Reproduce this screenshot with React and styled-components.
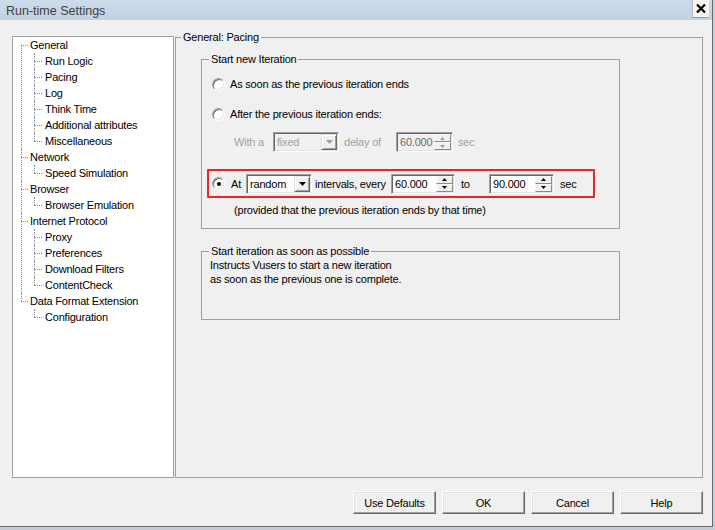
import React from 'react'
import styled, { createGlobalStyle } from 'styled-components'

const GlobalStyle = createGlobalStyle`
  html, body {
    margin: 0;
    padding: 0;
  }
  body {
    background: #c5ccd4;
    font-family: "Liberation Sans", Arial, sans-serif;
    font-size: 11px;
    letter-spacing: -0.2px;
    color: #000;
  }
`

const Window = styled.div`
  width: 712px;
  height: 526px;
  background: #f0f0f0;
  border-right: 1px solid #6b6b6b;
  border-bottom: 1px solid #6b6b6b;
  display: flex;
  flex-direction: column;
`

const TitleBar = styled.div`
  height: 20px;
  display: flex;
  align-items: center;
  justify-content: space-between;
  padding-left: 6px;
  padding-right: 3px;
  background: linear-gradient(#cddbea, #c2d2e3);
`

const Title = styled.span`
  font-size: 12.5px;
  letter-spacing: 0;
  color: #404040;
  margin-top: 1px;
`

const CloseButton = styled.div`
  width: 16px;
  height: 17px;
  align-self: flex-start;
  display: flex;
  align-items: center;
  justify-content: center;
  background: #f4f4f4;
  border-left: 1px solid #b8bcc2;
  border-bottom: 1px solid #9a9ea4;
`

const Main = styled.div`
  display: flex;
  align-items: flex-start;
  padding: 11px 0 0 12px;
`

const Tree = styled.div`
  width: 162px;
  height: 442px;
  box-sizing: border-box;
  margin-top: 5px;
  background: #fff;
  border: 1px solid #a0a0a0;
`

const TreeNode = styled.div`
  position: relative;
  &::before {
    content: '';
    position: absolute;
    left: ${p => (p.$level ? 21 : 8)}px;
    top: ${p => (p.$first && !p.$level ? 8 : 0)}px;
    ${p => (p.$last ? 'height: 8px;' : 'bottom: 0;')}
    border-left: 1px dotted #8c8c8c;
  }
`

const TreeRow = styled.div`
  position: relative;
  height: 16px;
  line-height: 16px;
  padding-left: ${p => (p.$level ? 32 : 17)}px;
  white-space: nowrap;
  &::before {
    content: '';
    position: absolute;
    left: ${p => (p.$level ? 21 : 8)}px;
    top: 8px;
    width: ${p => (p.$level ? 8 : 7)}px;
    border-top: 1px dotted #8c8c8c;
  }
`

const GroupBox = styled.fieldset`
  margin: ${p => p.$mt || 0}px 0 0 ${p => p.$ml || 0}px;
  padding: 0;
  width: ${p => p.$w}px;
  height: ${p => p.$h}px;
  box-sizing: border-box;
  border: 1px solid #a0a0a0;
  min-width: 0;
`

const GroupTitle = styled.legend`
  margin-left: ${p => p.$indent}px;
  padding: 0 2px;
  line-height: 13px;
  height: 13px;
`

const PanelBody = styled.div`
  padding-left: 25px;
`

const GroupBody = styled.div`
  padding-left: ${p => p.$pl || 0}px;
`

const OptionRow = styled.div`
  display: flex;
  align-items: center;
  height: ${p => p.$h || 16}px;
  margin-top: ${p => p.$mt || 0}px;
  padding-left: ${p => p.$pl || 0}px;
  color: ${p => (p.$disabled ? '#a0a0a0' : '#000')};
  white-space: nowrap;
`

const Highlight = styled.div`
  margin: 17px 0 0 5px;
  width: 388px;
  height: 29px;
  box-sizing: border-box;
  border: 2px solid #e5262c;
  border-radius: 1px;
  display: flex;
  align-items: center;
  padding-left: 3px;
`

const Radio = styled.span`
  position: relative;
  flex: none;
  width: 13px;
  height: 13px;
  box-sizing: border-box;
  border-radius: 50%;
  background: #fff;
  border: 1px solid;
  border-color: #a0a0a0 #fff #fff #a0a0a0;
  box-shadow: inset 1px 1px 0 #696969, inset -1px -1px 0 #e3e3e3;
  &::after {
    content: '';
    display: ${p => (p.$checked ? 'block' : 'none')};
    position: absolute;
    left: 3.5px;
    top: 3.5px;
    width: 4px;
    height: 4px;
    border-radius: 50%;
    background: #000;
  }
`

const Caption = styled.span`
  display: inline-block;
  margin-left: ${p => p.$ml || 0}px;
  width: ${p => (p.$w ? `${p.$w}px` : 'auto')};
  line-height: 16px;
`

const Sunken = styled.div`
  flex: none;
  width: ${p => p.$w}px;
  height: 20px;
  box-sizing: border-box;
  display: flex;
  align-items: stretch;
  padding: 1px;
  background: ${p => (p.$disabled ? '#f0f0f0' : '#fff')};
  border: 1px solid;
  border-color: #a0a0a0 #fff #fff #a0a0a0;
  box-shadow: inset 1px 1px 0 #696969, inset -1px -1px 0 #e3e3e3;
`

const FieldText = styled.span`
  flex: 1;
  padding-left: ${p => p.$pl || 2}px;
  line-height: 16px;
  color: ${p => p.$color || '#000'};
`

const RaisedBox = styled.div`
  width: 16px;
  box-sizing: border-box;
  display: flex;
  align-items: center;
  justify-content: center;
  background: #f0f0f0;
  border: 1px solid;
  border-color: #e3e3e3 #696969 #696969 #e3e3e3;
  box-shadow: inset 1px 1px 0 #fff, inset -1px -1px 0 #a0a0a0;
`

const SpinButtons = styled.div`
  width: 17px;
  display: flex;
  flex-direction: column;
`

const SpinHalf = styled.div`
  flex: 1;
  display: flex;
  align-items: center;
  justify-content: center;
  background: #f0f0f0;
  border: 1px solid;
  border-color: #f8f8f8 #8a8a8a #8a8a8a #f8f8f8;
`

const Description = styled.div`
  line-height: 14px;
`

const Footer = styled.div`
  display: flex;
  justify-content: flex-end;
  gap: 6px;
  margin-top: 13px;
  padding-right: 9px;
`

const DialogButton = styled.button`
  width: 83px;
  height: 23px;
  margin: 0;
  padding: 0;
  font: inherit;
  letter-spacing: inherit;
  color: #000;
  background: #f0f0f0;
  border: 1px solid;
  border-color: #fff #696969 #696969 #fff;
  box-shadow: inset -1px -1px 0 #a0a0a0, inset 1px 1px 0 #e3e3e3;
`

const treeData = [
  { label: 'General', children: ['Run Logic', 'Pacing', 'Log', 'Think Time', 'Additional attributes', 'Miscellaneous'] },
  { label: 'Network', children: ['Speed Simulation'] },
  { label: 'Browser', children: ['Browser Emulation'] },
  { label: 'Internet Protocol', children: ['Proxy', 'Preferences', 'Download Filters', 'ContentCheck'] },
  { label: 'Data Format Extension', children: ['Configuration'] },
]

const DownArrow = ({ color = '#000', w = 7, h = 4 }) => (
  <svg width={w} height={h} viewBox={`0 0 ${w} ${h}`}>
    <path d={`M0 0H${w}L${w / 2} ${h}Z`} fill={color} />
  </svg>
)

const UpArrow = ({ color = '#000', w = 5, h = 3 }) => (
  <svg width={w} height={h} viewBox={`0 0 ${w} ${h}`}>
    <path d={`M0 ${h}H${w}L${w / 2} 0Z`} fill={color} />
  </svg>
)

const Combo = ({ w, value, disabled }) => (
  <Sunken $w={w} $disabled={disabled}>
    <FieldText $color={disabled ? '#a0a0a0' : '#000'}>{value}</FieldText>
    <RaisedBox>
      <DownArrow color={disabled ? '#a0a0a0' : '#000'} />
    </RaisedBox>
  </Sunken>
)

const Spinner = ({ w, value, disabled }) => (
  <Sunken $w={w} $disabled={disabled}>
    <FieldText $color={disabled ? '#6d6d6d' : '#000'}>{value}</FieldText>
    <SpinButtons>
      <SpinHalf>
        <UpArrow color={disabled ? '#a0a0a0' : '#000'} />
      </SpinHalf>
      <SpinHalf>
        <DownArrow w={5} h={3} color={disabled ? '#a0a0a0' : '#000'} />
      </SpinHalf>
    </SpinButtons>
  </Sunken>
)

const App = () => {
  return (
    <>
      <GlobalStyle />
      <Window>
        <TitleBar>
          <Title>Run-time Settings</Title>
          <CloseButton>
            <svg width="10" height="9" viewBox="0 0 10 9">
              <path d="M1 0.5L9 8.5M9 0.5L1 8.5" stroke="#000" strokeWidth="2.2" />
            </svg>
          </CloseButton>
        </TitleBar>

        <Main>
          <Tree>
            {treeData.map((node, i) => (
              <TreeNode key={node.label} $first={i === 0} $last={i === treeData.length - 1}>
                <TreeRow>{node.label}</TreeRow>
                {node.children.map((child, j) => (
                  <TreeNode key={child} $level={1} $last={j === node.children.length - 1}>
                    <TreeRow $level={1}>{child}</TreeRow>
                  </TreeNode>
                ))}
              </TreeNode>
            ))}
          </Tree>

          <GroupBox $ml={1} $w={528} $h={447}>
            <GroupTitle $indent={5}>General: Pacing</GroupTitle>
            <PanelBody>
              <GroupBox $mt={9} $w={419} $h={176}>
                <GroupTitle $indent={7}>Start new Iteration</GroupTitle>
                <GroupBody>
                  <OptionRow $mt={10} $pl={10}>
                    <Radio />
                    <Caption $ml={5}>As soon as the previous iteration ends</Caption>
                  </OptionRow>
                  <OptionRow $mt={14} $pl={10}>
                    <Radio />
                    <Caption $ml={5}>After the previous iteration ends:</Caption>
                  </OptionRow>
                  <OptionRow $mt={10} $h={20} $pl={32} $disabled>
                    <Caption $w={39}>With a</Caption>
                    <Combo w={66} value="fixed" disabled />
                    <Caption $ml={5} $w={52}>delay of</Caption>
                    <Spinner w={57} value="60.000" disabled />
                    <Caption $ml={5}>sec</Caption>
                  </OptionRow>
                  <Highlight>
                    <Radio $checked />
                    <Caption $ml={6} $w={15}>At</Caption>
                    <Combo w={66} value="random" />
                    <Caption $ml={3} $w={76}>intervals, every</Caption>
                    <Spinner w={64} value="60.000" />
                    <Caption $ml={6} $w={28}>to</Caption>
                    <Spinner w={65} value="90.000" />
                    <Caption $ml={6}>sec</Caption>
                  </Highlight>
                  <OptionRow $mt={4} $pl={32}>
                    <Caption>(provided that the previous iteration ends by that time)</Caption>
                  </OptionRow>
                </GroupBody>
              </GroupBox>

              <GroupBox $mt={16} $w={419} $h={75}>
                <GroupTitle $indent={7}>Start iteration as soon as possible</GroupTitle>
                <GroupBody $pl={8}>
                  <Description>Instructs Vusers to start a new iteration</Description>
                  <Description>as soon as the previous one is complete.</Description>
                </GroupBody>
              </GroupBox>
            </PanelBody>
          </GroupBox>
        </Main>

        <Footer>
          <DialogButton>Use Defaults</DialogButton>
          <DialogButton>OK</DialogButton>
          <DialogButton>Cancel</DialogButton>
          <DialogButton>Help</DialogButton>
        </Footer>
      </Window>
    </>
  )
}

export default App
